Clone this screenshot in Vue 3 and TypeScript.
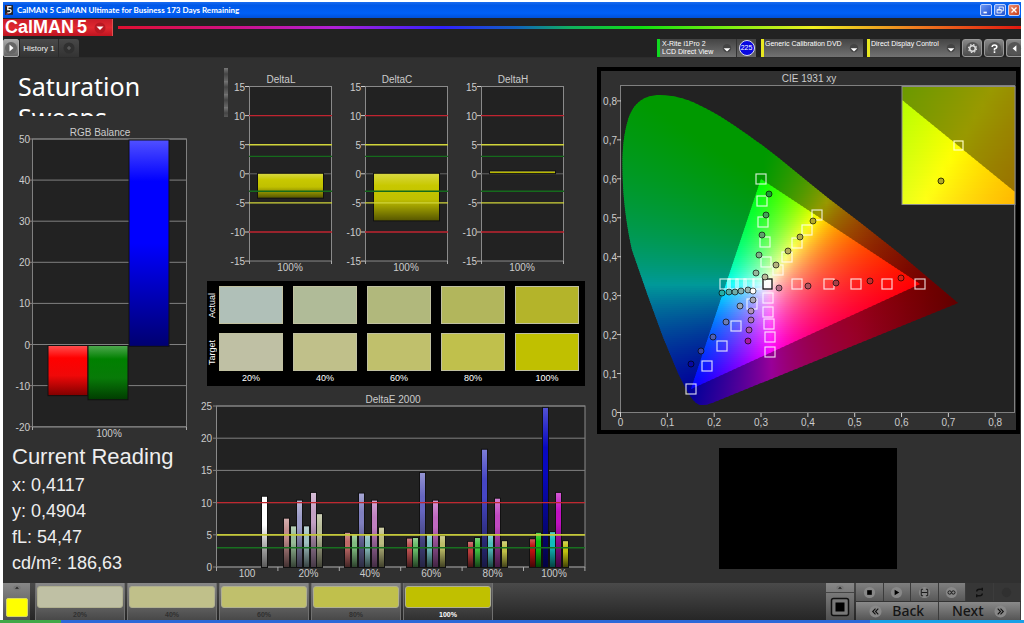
<script setup lang="ts">
type Point = [number, number]
interface Row { id: string; x: number; y: number; w: number; h: number; stops: { o: number; c: string }[] }

const plot = { left: 620.5, bottom: 412.5, sx: 468.4, sy: 389.5 }
const inset = { x: 902, y: 86, w: 113, h: 119, cx: 958, cy: 145.5, scale: 2340 }

function colorAt(x: number, y: number, inside: boolean): string {
  const yy = Math.max(y, 0.004)
  const X = x / yy
  const Z = (1 - x - yy) / yy
  let rgb = [
    3.2406 * X - 1.5372 - 0.4986 * Z,
    -0.9689 * X + 1.8758 + 0.0415 * Z,
    0.0557 * X - 0.204 + 1.057 * Z,
  ].map((v) => Math.max(v, 0))
  const top = Math.max(...rgb, 0.0001)
  const level = inside ? 1 : 0.6 - Math.max(0, x - 0.5)
  rgb = rgb.map((v) => Math.round((255 * level * v) / top))
  return `rgb(${rgb.join(',')})`
}

function buildRows(
  prefix: string, x: number, y: number, w: number, h: number, step: number,
  toXy: (px: number, py: number) => Point, inside: boolean,
): Row[] {
  const rows: Row[] = []
  const count = Math.round(w / 8)
  for (let top = y; top < y + h; top += step) {
    const stops: Row['stops'] = []
    for (let i = 0; i <= count; i++) {
      const [cx, cy] = toXy(x + (w * i) / count, top + step / 2)
      stops.push({ o: i / count, c: colorAt(cx, cy, inside) })
    }
    rows.push({ id: `${prefix}${top}`, x, y: top, w, h: step + 1, stops })
  }
  return rows
}

const mainXy = (px: number, py: number): Point => [(px - plot.left) / plot.sx, (plot.bottom - py) / plot.sy]
const insetXy = (px: number, py: number): Point => [
  0.4193 + (px - inset.cx) / inset.scale,
  0.5053 - (py - inset.cy) / inset.scale,
]

const layers = [
  { clip: 'url(#locus)', rows: buildRows('o', 621, 94, 340, 312, 2, mainXy, false) },
  { clip: 'url(#gamut)', rows: buildRows('g', 690, 178, 232, 212, 2, mainXy, true) },
]
const insetLayers = [
  { clip: 'url(#inset-box)', rows: buildRows('io', inset.x, inset.y, inset.w, inset.h, 3, insetXy, false) },
  { clip: 'url(#inset-gamut)', rows: buildRows('ig', inset.x, inset.y, inset.w, inset.h, 3, insetXy, true) },
]
const allRows = [...layers, ...insetLayers].flatMap((l) => l.rows)

const targets: Point[] = [
  [725, 284], [733, 284], [741, 284], [749, 284], [758, 284],
  [797, 284], [829, 284], [856, 284], [887, 284], [920, 284],
  [768, 298], [768, 312], [769, 324], [770, 337], [770, 352],
  [752, 304], [736, 326], [722, 346], [707, 366], [691, 389],
  [761, 179], [762, 201], [763, 222], [765, 242], [766, 262],
  [817, 215], [807, 230], [797, 243], [787, 257], [778, 270],
]
const readings: { p: Point; c: string }[] = [
  { p: [769, 194], c: '#1f9a35' }, { p: [766, 215], c: '#45a058' }, { p: [762, 235], c: '#5fa06c' },
  { p: [759, 255], c: '#7fb288' }, { p: [756, 273], c: '#96b89c' }, { p: [765, 277], c: '#b8b89a' },
  { p: [776, 265], c: '#b6b47e' }, { p: [788, 251], c: '#b6b060' }, { p: [800, 237], c: '#b2ac48' },
  { p: [813, 221], c: '#b4ac28' }, { p: [779, 288], c: '#b86f88' }, { p: [808, 286], c: '#b45560' },
  { p: [836, 283], c: '#a84048' }, { p: [870, 281], c: '#c03030' }, { p: [901, 278], c: '#d82418' },
  { p: [722, 293], c: '#25b0a8' }, { p: [729, 292], c: '#55aca8' }, { p: [735, 292], c: '#70aca8' },
  { p: [741, 291], c: '#84b0b0' }, { p: [748, 290], c: '#9ab4b4' }, { p: [753, 300], c: '#a8a8b8' },
  { p: [751, 311], c: '#b090bc' }, { p: [751, 320], c: '#ac74b4' }, { p: [749, 330], c: '#ac50b0' },
  { p: [748, 341], c: '#aa18a0' }, { p: [740, 306], c: '#98a4b8' }, { p: [726, 322], c: '#6c7cb4' },
  { p: [713, 337], c: '#5060b4' }, { p: [701, 351], c: '#3a44a4' }, { p: [691, 364], c: '#0808a0' },
  { p: [753, 291], c: '#ffffff' },
]
const cieY = [0, 1, 2, 3, 4, 5, 6, 7, 8].map((n) => ({ t: n ? `0,${n}` : '0', p: plot.bottom - n * 38.95 }))
const cieX = [0, 1, 2, 3, 4, 5, 6, 7, 8].map((n) => ({ t: n ? `0,${n}` : '0', p: plot.left + n * 46.84 }))

const balanceTicks = [50, 40, 30, 20, 10, 0, -10, -20]
const balanceY = (v: number) => 139 + (50 - v) * 4.11
const balanceBars = [
  { x: 48, from: 0, to: -12.2, g: 'red' },
  { x: 88, from: 0, to: -13.2, g: 'green' },
  { x: 129, from: 50, to: -0.2, g: 'blue' },
]

const deltaY = (v: number) => 18.5 + (15 - v) * 5.82
const deltaTicks = [15, 10, 5, 0, -5, -10, -15]
const limits = [
  { v: 10, c: '#c02430' }, { v: 5, c: '#d0d43a' }, { v: 3, c: '#156a1c' },
  { v: -3, c: '#156a1c' }, { v: -5, c: '#d0d43a' }, { v: -10, c: '#c02430' },
]
const deltas = [
  { name: 'DeltaL', from: 0, to: -4.1 },
  { name: 'DeltaC', from: 0, to: -8 },
  { name: 'DeltaH', from: 0.4, to: 0.1 },
]

const errorY = (v: number) => 567 - v * 6.44
const errorGroups = [
  { label: '20%', v: [7.5, 6.3, 10.3, 6.3, 11.5, 8.2], c: ['#c08c8c', '#98bc98', '#9c9cc8', '#a0c0c0', '#c4a0c4', '#b8bc98'] },
  { label: '40%', v: [5.3, 5, 11.4, 5.1, 10.3, 6.1], c: ['#c06a68', '#80bc80', '#8080c0', '#88bcbc', '#c080c0', '#bcbc80'] },
  { label: '60%', v: [4.4, 4.5, 14.6, 5, 10.3, 4.8], c: ['#bc5050', '#68bc68', '#6666c0', '#70bcbc', '#c068c0', '#bcbc66'] },
  { label: '80%', v: [3.9, 4.5, 18.2, 4.9, 10.6, 4], c: ['#bc3c3c', '#40c040', '#4646c4', '#50bcbc', '#c048c0', '#c0c048'] },
  { label: '100%', v: [4.3, 5.3, 24.7, 5.4, 11.5, 4], c: ['#c01010', '#10c010', '#0808c0', '#10bcbc', '#c010c0', '#c0c010'] },
]
const errorBars = [
  { x: 262, v: 10.9, c: '#ffffff' },
  ...errorGroups.flatMap((g, i) =>
    g.v.map((v, j) => ({ x: Math.round(284 + i * 61.4 + j * 6.67), v, c: g.c[j] }))),
]
const errorLabels = ['100', ...errorGroups.map((g) => g.label)]

const swatches = [
  { label: '20%', actual: '#b0c0b8', target: '#bfc0a4' },
  { label: '40%', actual: '#b0bb98', target: '#c0c08a' },
  { label: '60%', actual: '#b1b87c', target: '#c0c06c' },
  { label: '80%', actual: '#b2b65c', target: '#c0c04c' },
  { label: '100%', actual: '#b4b42a', target: '#c0c000' },
]
const reading = ['x: 0,4117', 'y: 0,4904', 'fL: 54,47', 'cd/m²: 186,63']
</script>

<template>
  <div class="window">
    <header class="titlebar">
      <svg class="app-icon" viewBox="0 0 10 12"><rect width="10" height="12" fill="#222" /><path d="M8 2H3.500V5.500H6.500Q8 6 7.500 8T3 9.500" fill="none" stroke="#eee" stroke-width="1.800" /><path d="M1 1h2M1 11h3" stroke="#e33" /></svg>
      <h1>CalMAN 5 CalMAN Ultimate for Business 173 Days Remaining</h1>
      <div class="window-buttons">
        <button aria-label="Minimize"><svg viewBox="0 0 12 12"><path d="M3 9h4" stroke="#fff" stroke-width="2" /></svg></button>
        <button aria-label="Restore"><svg viewBox="0 0 12 12"><path d="M5 5V2.500h5V7H8M2.500 5.500h5V9.500h-5zM2.500 6h5" fill="none" stroke="#fff" /></svg></button>
        <button class="close" aria-label="Close"><svg viewBox="0 0 12 12"><path d="M3 3l6 6M9 3l-6 6" stroke="#fff" stroke-width="1.600" /></svg></button>
      </div>
    </header>

    <div class="brand">
      <button class="logo">CalMAN<b>5</b><svg viewBox="0 0 12 12"><circle cx="6" cy="6" r="5.500" fill="#b81822" /><path d="M2.500 4.500h7L6 8z" fill="#fff" /></svg></button>
      <div class="rainbow"></div>
    </div>

    <nav class="tabs">
      <button class="play" aria-label="Expand"><svg viewBox="0 0 14 14"><circle cx="7" cy="7" r="6" fill="#666" /><path d="M5.500 3.500v7L9.500 7z" fill="#fff" /></svg></button>
      <button class="history">History 1</button>
      <button class="add" aria-label="Add tab"><svg viewBox="0 0 14 14"><circle cx="7" cy="7" r="5.500" fill="#303030" /><path d="M5 7h4M7 5v4" stroke="#666" /></svg></button>
      <div class="devices">
        <button class="device meter">
          <span>X-Rite i1Pro 2<br />LCD Direct View</span>
          <svg class="arrow" viewBox="0 0 12 12"><circle cx="6" cy="5" r="5" fill="#444" /><path d="M2 5h8L6 9z" fill="#fff" /></svg>
        </button>
        <div class="count"><span>225</span></div>
        <div class="device source">
          <select aria-label="Source"><option>Generic Calibration DVD</option></select>
          <svg class="arrow" viewBox="0 0 12 12"><circle cx="6" cy="5" r="5" fill="#444" /><path d="M2 5h8L6 9z" fill="#fff" /></svg>
        </div>
        <div class="device display">
          <select aria-label="Display"><option>Direct Display Control</option></select>
          <svg class="arrow" viewBox="0 0 12 12"><circle cx="6" cy="5" r="5" fill="#444" /><path d="M2 5h8L6 9z" fill="#fff" /></svg>
        </div>
        <button class="tool" aria-label="Settings"><svg viewBox="0 0 16 16"><circle cx="8" cy="8" r="7" fill="#555" /><circle cx="8" cy="8" r="3" fill="none" stroke="#ddd" stroke-width="1.600" /><circle cx="8" cy="8" r="4.300" fill="none" stroke="#ddd" stroke-width="1.200" stroke-dasharray="1.700 1.677" /></svg></button>
        <button class="tool" aria-label="Help"><svg viewBox="0 0 16 16"><circle cx="8" cy="8" r="7" fill="#555" /><path d="M5.500 6.500Q5.500 4.200 8 4.200T10.500 6.300Q10.500 7.500 8 8.600V10M8 11v1.800" fill="none" stroke="#fff" stroke-width="1.700" /></svg></button>
        <button class="tool last" aria-label="Collapse"><svg viewBox="0 0 16 16"><circle cx="8" cy="8" r="7" fill="#555" /><path d="M10 4.500v7L6 8z" fill="#fff" /></svg></button>
      </div>
    </nav>

    <main class="workspace">
      <section class="left">
        <div class="heading"><h2>Saturation Sweeps</h2></div>
        <svg class="chart" viewBox="3 124 203 316" role="img" aria-label="RGB Balance">
          <defs>
            <linearGradient id="red" x2="0" y2="1"><stop offset="0" stop-color="#ff5050" /><stop offset=".25" stop-color="#ff0000" /><stop offset=".6" stop-color="#f00808" /><stop offset="1" stop-color="#800000" /></linearGradient>
            <linearGradient id="green" x2="0" y2="1"><stop offset="0" stop-color="#50a850" /><stop offset=".25" stop-color="#008000" /><stop offset=".6" stop-color="#087a08" /><stop offset="1" stop-color="#003c00" /></linearGradient>
            <linearGradient id="blue" x2="0" y2="1"><stop offset="0" stop-color="#5050ff" /><stop offset=".2" stop-color="#0000ff" /><stop offset=".5" stop-color="#0000ff" /><stop offset="1" stop-color="#000070" /></linearGradient>
          </defs>
          <rect x="32.500" y="139" width="154" height="288" fill="#222" stroke="#808080" />
          <g v-for="t in balanceTicks" :key="t">
            <path :d="`M29 ${balanceY(t)}H186.500`" stroke="#808080" />
            <text x="30" :y="balanceY(t) + 4" text-anchor="end">{{ t }}</text>
          </g>
          <path d="M32.500 427v3M186.500 427v3" stroke="#aaa" />
          <rect v-for="b in balanceBars" :key="b.g" :x="b.x" :y="balanceY(b.from) + 1" width="40" :height="(b.from - b.to) * 4.11" :fill="`url(#${b.g})`" stroke="#111" />
          <text x="100" y="136" text-anchor="middle">RGB Balance</text>
          <text x="109" y="437" text-anchor="middle">100%</text>
        </svg>
        <div class="reading">
          <h3>Current Reading</h3>
          <p v-for="line in reading" :key="line">{{ line }}</p>
        </div>
      </section>

      <section class="middle">
        <div class="deltas">
          <div class="grip"></div>
          <svg v-for="d in deltas" :key="d.name" class="chart" viewBox="0 0 116 208" role="img" :aria-label="d.name">
            <defs>
              <linearGradient id="yellow" x2="0" y2="1"><stop offset="0" stop-color="#d8d840" /><stop offset=".25" stop-color="#c8c800" /><stop offset=".55" stop-color="#c0c000" /><stop offset="1" stop-color="#585800" /></linearGradient>
            </defs>
            <rect x="21.500" y="18.500" width="82" height="174.500" fill="#222" stroke="#8a8a8a" />
            <g v-for="t in deltaTicks" :key="t">
              <path :d="`M17 ${deltaY(t)}h4`" stroke="#ccc" />
              <text x="17" :y="deltaY(t) + 4" text-anchor="end">{{ t }}</text>
            </g>
            <path :d="`M21 ${deltaY(0)}h82`" stroke="#666" />
            <path d="M21.500 193v3M103.500 193v3" stroke="#aaa" />
            <rect x="30" :y="deltaY(d.from)" width="65" :height="(d.from - d.to) * 5.82" fill="url(#yellow)" stroke="#111" stroke-width="2" paint-order="stroke" />
            <path v-for="l in limits" :key="l.v" :d="`M21 ${deltaY(l.v)}h83`" :stroke="l.c" stroke-width="1.400" />
            <text x="53" y="15" text-anchor="middle">{{ d.name }}</text>
            <text x="62" y="203" text-anchor="middle">100%</text>
          </svg>
        </div>

        <div class="swatches">
          <div class="swatch-row">
            <span class="side">Actual</span>
            <div class="cells"><i v-for="s in swatches" :key="s.label" :style="{ background: s.actual }"></i></div>
          </div>
          <div class="swatch-row">
            <span class="side">Target</span>
            <div class="cells"><i v-for="s in swatches" :key="s.label" :style="{ background: s.target }"></i></div>
          </div>
          <div class="cells labels"><span v-for="s in swatches" :key="s.label">{{ s.label }}</span></div>
        </div>

        <svg class="chart error" viewBox="206 392 388 190" role="img" aria-label="DeltaE 2000">
          <defs>
            <linearGradient id="shade" x2="0" y2="1"><stop offset="0" stop-color="#fff" stop-opacity=".3" /><stop offset=".25" stop-color="#fff" stop-opacity="0" /><stop offset=".4" stop-color="#000" stop-opacity="0" /><stop offset="1" stop-color="#000" stop-opacity=".65" /></linearGradient>
          </defs>
          <rect x="216.500" y="406" width="368.500" height="161" fill="#222" stroke="#8a8a8a" />
          <g v-for="t in [25, 20, 15, 10, 5, 0]" :key="t">
            <path :d="`M213 ${errorY(t)}H585`" stroke="#808080" />
            <text x="212" :y="errorY(t) + 4" text-anchor="end">{{ t }}</text>
          </g>
          <g v-for="(b, i) in errorBars" :key="i">
            <rect :x="b.x" :y="errorY(b.v)" width="5" :height="b.v * 6.44" :fill="b.c" stroke="#111" paint-order="stroke" stroke-width="2" />
            <rect :x="b.x" :y="errorY(b.v)" width="5" :height="b.v * 6.44" fill="url(#shade)" />
          </g>
          <path :d="`M217 ${errorY(10)}H585`" stroke="#c02830" stroke-width="1.400" />
          <path :d="`M217 ${errorY(5)}H585`" stroke="#c4c838" stroke-width="1.700" />
          <path :d="`M217 ${errorY(3)}H585`" stroke="#187020" stroke-width="1.400" />
          <path v-for="n in 7" :key="n" :d="`M${155.1 + n * 61.4} 567v4`" stroke="#aaa" />
          <text x="393" y="403" text-anchor="middle">DeltaE 2000</text>
          <text v-for="(l, i) in errorLabels" :key="l" :x="247 + i * 61.4" y="577" text-anchor="middle">{{ l }}</text>
        </svg>
      </section>

      <section class="right">
        <div class="cie">
          <svg class="chart" viewBox="601 71 415 359" role="img" aria-label="CIE 1931 xy">
            <defs>
              <clipPath id="locus"><path d="M702 405C696 405 692 399 687 391L678 373L663 337L648 296L632 250C627 228 624 205 623 185C622 160 622 140 628 120C633 104 643 95 660 95C675 95 690 100 705 108C725 118 745 133 762 145C785 162 805 180 828 198L862 224L900 254L958 303L712 403Q707 405 702 405Z" /></clipPath>
              <clipPath id="gamut"><path d="M761 179L920 284L691 389Z" /></clipPath>
              <clipPath id="inset-box"><rect x="902" y="86" width="113" height="119" /></clipPath>
              <clipPath id="inset-gamut"><path d="M902 100L1015 192V205H902Z" /></clipPath>
              <linearGradient v-for="r in allRows" :id="r.id" :key="r.id">
                <stop v-for="s in r.stops" :key="s.o" :offset="s.o" :stop-color="s.c" />
              </linearGradient>
            </defs>
            <rect x="620.500" y="85.500" width="394" height="327" fill="#222" stroke="#808080" />
            <g v-for="l in layers" :key="l.clip" :clip-path="l.clip">
              <rect v-for="r in l.rows" :key="r.id" :x="r.x" :y="r.y" :width="r.w" :height="r.h" :fill="`url(#${r.id})`" />
            </g>
            <rect v-for="(p, i) in targets" :key="i" :x="p[0] - 5" :y="p[1] - 5" width="10" height="10" fill="none" stroke="#fff" stroke-opacity=".8" stroke-width="1.200" />
            <rect x="763" y="279" width="9" height="10" fill="#fff" fill-opacity=".8" stroke="#111" stroke-width="1.300" />
            <circle v-for="(r, i) in readings" :key="i" :cx="r.p[0]" :cy="r.p[1]" r="3" :fill="r.c" stroke="#000" stroke-opacity=".65" />
            <g v-for="t in cieY" :key="t.p">
              <path :d="`M617 ${t.p}h4`" stroke="#ccc" />
              <text x="617" :y="t.p + 4" text-anchor="end">{{ t.t }}</text>
            </g>
            <g v-for="t in cieX" :key="t.p">
              <path :d="`M${t.p} 413v4`" stroke="#ccc" />
              <text :x="t.p" y="426" text-anchor="middle">{{ t.t }}</text>
            </g>
            <text x="809" y="82" text-anchor="middle">CIE 1931 xy</text>
            <g v-for="l in insetLayers" :key="l.clip" :clip-path="l.clip">
              <rect v-for="r in l.rows" :key="r.id" :x="r.x" :y="r.y" :width="r.w" :height="r.h" :fill="`url(#${r.id})`" />
            </g>
            <rect x="902" y="86.500" width="113" height="118" fill="none" stroke="#8c8c8c" />
            <rect x="954" y="141" width="9" height="9" fill="none" stroke="#ffffc0" stroke-width="1.200" />
            <circle cx="941" cy="181" r="3" fill="#b0a828" stroke="#333300" />
          </svg>
        </div>
        <div class="patch"></div>
      </section>
    </main>

    <footer class="dock">
      <button class="current" aria-label="Current colour">
        <svg viewBox="0 0 10 6"><ellipse cx="5" cy="3" rx="4.500" ry="3" fill="#777" /><path d="M2.500 4L5 1.500L7.500 4z" fill="#222" /></svg>
        <i></i>
      </button>
      <div class="steps">
        <button v-for="(s, i) in swatches" :key="s.label" :class="{ active: i === 4 }">
          <i :style="{ background: s.target }"></i><span>{{ s.label }}</span>
        </button>
      </div>
      <div class="controls">
        <div class="target">
          <button aria-label="Raise"><svg viewBox="0 0 10 6"><ellipse cx="5" cy="3" rx="4.500" ry="3" fill="#777" /><path d="M2.500 4L5 1.500L7.500 4z" fill="#222" /></svg></button>
          <button class="square" aria-label="Pattern window"><svg viewBox="0 0 20 20"><rect x="1.500" y="1.500" width="17" height="17" rx="2" fill="#777" stroke="#111" stroke-width="1.500" /><rect x="5.500" y="5.500" width="9" height="9" /></svg></button>
        </div>
        <div class="panel">
          <div class="media">
            <button aria-label="Stop"><svg viewBox="0 0 14 14"><circle cx="7" cy="7" r="6" fill="#888" /><path d="M4.500 4.500h5v5h-5z" /></svg></button>
            <button aria-label="Play"><svg viewBox="0 0 14 14"><circle cx="7" cy="7" r="6" fill="#888" /><path d="M5 4l5 3-5 3z" /></svg></button>
            <button aria-label="Series"><svg viewBox="0 0 14 14"><circle cx="7" cy="7" r="6" fill="#888" /><path d="M5.500 3.500H3.500v7h2M8.500 3.500h2v7h-2M4 7h6" fill="none" stroke="#111" /></svg></button>
            <button aria-label="Continuous"><svg viewBox="0 0 14 14"><circle cx="7" cy="7" r="6" fill="#888" /><circle cx="5" cy="7" r="1.800" fill="none" stroke="#111" /><circle cx="9" cy="7" r="1.800" fill="none" stroke="#111" /></svg></button>
            <button class="off" aria-label="Refresh"><svg viewBox="0 0 14 14"><path d="M4 6q0-2.500 3-2.500h3M10 2v3M10 8q0 2.500-3 2.500H4M4 9v3" fill="none" stroke="#111" stroke-width="1.500" /></svg></button>
            <button class="off" aria-label="Record"><svg viewBox="0 0 14 14"><circle cx="7" cy="7" r="5" fill="#303030" /></svg></button>
          </div>
          <div class="steps-nav">
            <button><svg viewBox="0 0 14 14"><circle cx="7" cy="7" r="6.500" fill="#888" /><path d="M7 4L4 7l3 3M10 4L7 7l3 3" fill="none" stroke="#111" stroke-width="1.200" /></svg><span>Back</span></button>
            <button><span>Next</span><svg viewBox="0 0 14 14"><circle cx="7" cy="7" r="6.500" fill="#888" /><path d="M4 4l3 3-3 3M7 4l3 3-3 3" fill="none" stroke="#111" stroke-width="1.200" /></svg></button>
          </div>
        </div>
      </div>
    </footer>
    <div class="taskbar"></div>
  </div>
</template>

<style>
body { margin: 0; background: #fff; }
</style>

<style scoped>
* { box-sizing: border-box; }
button, select { margin: 0; padding: 0; border: 0; font-family: inherit; color: inherit; background: none; }
h1, h2, h3, p { margin: 0; font-weight: normal; }
svg { display: block; }
.window { min-height: 100vh; display: flex; flex-direction: column; padding: 2px 3px 0; background: #fff; font-family: "Liberation Sans", Arial, sans-serif; color: #eee; }
.titlebar { height: 16px; display: flex; align-items: center; gap: 4px; padding: 0 1px 0 2px; background: linear-gradient(#1a6cf0, #0058e8 20%, #0060f8 70%, #0050d8); }
.app-icon { width: 8px; height: 10px; }
.titlebar h1 { flex: 1; font: bold 8px/16px Lato, "Liberation Sans", sans-serif; color: #fff; white-space: nowrap; }
.window-buttons { display: flex; gap: 2px; }
.window-buttons button { width: 12px; height: 12px; border: 1px solid #c0d4ff; border-radius: 2px; background: linear-gradient(135deg, #6c98f4, #2050d0); }
.window-buttons .close { background: linear-gradient(135deg, #f09070, #c83c18); }
.window-buttons svg { width: 10px; height: 10px; }
.brand { height: 21px; display: flex; align-items: flex-start; gap: 5px; padding-top: 1px; background: #222; }
.logo { width: 110px; height: 17px; display: flex; align-items: center; padding-left: 2px; font-weight: bold; font-size: 18px; line-height: 17px; color: #fff; background: linear-gradient(#c81c28, #e02830 50%, #c01420); border-right: 1px solid #e05050; }
.logo b { margin-left: 3px; }
.logo svg { width: 12px; height: 12px; margin-left: 7px; }
.rainbow { flex: 1; height: 3px; margin-top: 7px; background: linear-gradient(90deg, #e01030, #d01080 12%, #b020d8 24%, #3020ff 36%, #1060c0 44%, #10b060 50%, #10e010 58%, #80f010 68%, #f0f020 77%, #f08020 88%, #e01810); }
.tabs { height: 19px; display: flex; align-items: stretch; background: #222; border-bottom: 1px solid #2c2c2c; }
.play { width: 16px; border: 1px solid #aaa; border-radius: 2px; background: linear-gradient(#aaa, #666); }
.play svg { width: 14px; height: 14px; }
.history { width: 38px; margin-left: 1px; font-size: 8px; background: linear-gradient(#4a4a4a, #333); white-space: nowrap; }
.add { width: 21px; padding-left: 3px; background: linear-gradient(#484848, #333); border-left: 1px solid #2b2b2b; border-radius: 0 3px 0 0; }
.add svg { width: 14px; }
.devices { margin-left: auto; display: flex; }
.device { position: relative; height: 18px; font-size: 7px; line-height: 8px; text-align: left; color: #fff; background: linear-gradient(#444, #727272); }
.meter { width: 79px; padding-left: 2px; border-left: 3px solid #10d820; white-space: nowrap; }
.source { width: 102px; margin-left: 5px; border-left: 3px solid #e8e820; }
.display { width: 93px; margin-left: 4px; border-left: 3px solid #e8e820; }
.device select { width: 100%; height: 18px; appearance: none; font-size: 7px; line-height: 8px; padding: 1px 0 9px 1px; }
.device option { background: #444; }
.arrow { position: absolute; right: 4px; bottom: 3px; width: 10px; height: 10px; pointer-events: none; }
.count { width: 20px; display: grid; place-items: center; background: linear-gradient(#444, #666); border-left: 1px solid #333; }
.count span { width: 16px; height: 16px; border: 1px solid #dde; border-radius: 50%; background: #0808e0; color: #fff; font-size: 7px; line-height: 14px; text-align: center; }
.tool { width: 20px; height: 18px; margin-left: 2px; display: grid; place-items: center; border: 1px solid #999; border-radius: 3px; background: linear-gradient(#888, #4a4a4a); }
.tool svg { width: 15px; height: 15px; }
.tool.last { width: 15px; border-right: 0; border-radius: 3px 0 0 3px; }

.workspace { flex: 1; display: grid; grid-template-columns: 203fr 388fr 427fr; background: #303030; align-items: start; }
.chart { width: 100%; height: auto; overflow: visible; }
.chart text { font-size: 10px; fill: #ccc; }
.heading { height: 58px; margin-bottom: 8px; padding: 13px 40px 0 15px; overflow: hidden; }
.heading h2 { font: 25px/31px "Noto Sans", "Open Sans", sans-serif; color: #fff; }
.reading { padding: 2px 0 0 9px; font-size: 18px; line-height: 26px; }
.reading h3 { font-size: 22px; line-height: 30px; }
.deltas { display: flex; padding: 10px 18px 0; }
.deltas .chart { flex: 1; min-width: 0; }
.grip { width: 4px; height: 49px; background: repeating-linear-gradient(#777, #444 6px, #666 13px); }
.swatches { margin: 5px 9px 6px 1px; height: 105px; padding: 5px 6px 0 0; background: #000; }
.swatch-row { height: 47px; display: flex; }
.side { width: 12px; height: 38px; font-size: 9px; line-height: 11px; text-align: center; writing-mode: vertical-rl; transform: rotate(180deg); color: #fff; }
.cells { flex: 1; display: grid; grid-template-columns: repeat(5, 1fr); column-gap: 10px; }
.cells i { height: 38px; border: 1px solid #c0c0a0; }
.labels { margin-left: 12px; margin-top: -7px; font-size: 9px; line-height: 11px; text-align: center; color: #fff; }
.cie { margin: 9px 1px 0 3px; border: 4px solid #000; }
.patch { width: 178px; height: 121px; margin: 14px auto 0; background: #000; }

.dock { height: 37px; display: flex; background: linear-gradient(#4a4a4a, #262626); }
.current { width: 27px; display: flex; flex-direction: column; align-items: center; padding-top: 2px; background: linear-gradient(#888, #505050); }
.current svg { width: 8px; height: 6px; }
.current i { width: 22px; height: 19px; margin-top: 7px; border-radius: 2px; border: 1px solid #d8d860; background: #ffff00; }
.steps { display: flex; gap: 2px; margin-left: 5px; }
.steps button { width: 90px; display: flex; flex-direction: column; align-items: center; padding-top: 3px; background: linear-gradient(#888, #484848); font-size: 7px; line-height: 11px; font-weight: bold; color: #303030; border: 1px solid #707070; border-width: 0 1px; }
.steps i { width: 86px; height: 22px; border: 1px solid #b0b090; border-radius: 3px; }
.steps .active { color: #fff; background: linear-gradient(#666, #303030); }
.steps span { margin-top: 1px; }
.controls { margin-left: auto; display: flex; gap: 2px; }
.target { width: 28px; display: flex; flex-direction: column; background: linear-gradient(#888, #505050); }
.target button { height: 10px; display: grid; place-items: center; border-bottom: 1px solid #444; }
.target svg { width: 8px; height: 6px; }
.target .square { height: 27px; border: 0; }
.target .square svg { width: 20px; height: 20px; }
.panel { width: 165px; }
.media { display: grid; grid-template-columns: repeat(6, 1fr); height: 18px; }
.media button { display: grid; place-items: center; background: linear-gradient(#808080, #585858); border-right: 1px solid #3c3c3c; }
.media .off { background: #363636; }
.media svg { width: 13px; height: 13px; }
.steps-nav { display: grid; grid-template-columns: 1fr 1fr; height: 19px; border-top: 1px solid #333; }
.steps-nav button { display: flex; align-items: center; justify-content: center; gap: 10px; font: 500 14px/16px "Noto Sans", sans-serif; color: #151515; background: linear-gradient(#8a8a8a, #555); border-right: 1px solid #3c3c3c; }
.steps-nav svg { width: 13px; height: 13px; }
.taskbar { height: 3px; margin: 0 -3px; background: linear-gradient(90deg, #40a848 0 6%, #2c68d8 6% 85%, #18a0e8 85%); }
</style>
